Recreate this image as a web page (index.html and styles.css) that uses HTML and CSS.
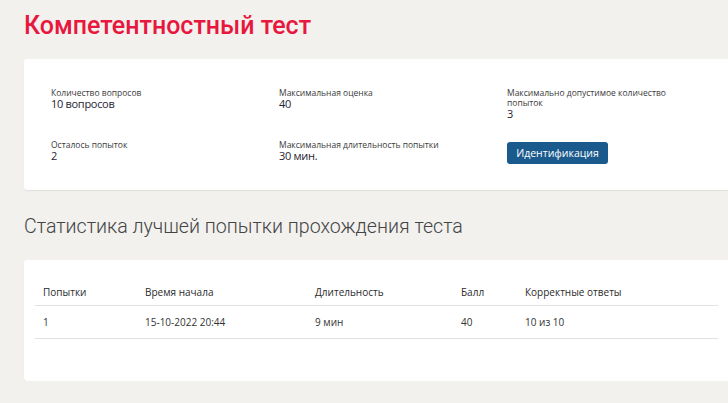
FILE: index.html
```html
<!DOCTYPE html>
<html lang="ru">
<head>
    <meta charset="UTF-8">
    <title>Компетентностный тест</title>
    <link rel="stylesheet" href="styles.css">
</head>
<body>
    <h1 class="title">Компетентностный тест</h1>
    <div class="card info">
        <div class="item">
            <div class="label">Количество вопросов</div>
            <div class="value">10 вопросов</div>
        </div>
        <div class="item">
            <div class="label">Максимальная оценка</div>
            <div class="value">40</div>
        </div>
        <div class="item">
            <div class="label narrow">Максимально допустимое количество попыток</div>
            <div class="value">3</div>
        </div>
        <div class="item">
            <div class="label">Осталось попыток</div>
            <div class="value">2</div>
        </div>
        <div class="item">
            <div class="label">Максимальная длительность попытки</div>
            <div class="value">30 мин.</div>
        </div>
        <div class="item">
            <a href="#" class="btn">Идентификация</a>
        </div>
    </div>
    <h2 class="subtitle">Статистика лучшей попытки прохождения теста</h2>
    <div class="card stats">
        <table class="tbl">
            <tr>
                <th class="c1">Попытки</th>
                <th class="c2">Время начала</th>
                <th class="c3">Длительность</th>
                <th class="c4">Балл</th>
                <th>Корректные ответы</th>
            </tr>
            <tr>
                <td>1</td>
                <td>15-10-2022 20:44</td>
                <td>9 мин</td>
                <td>40</td>
                <td>10 из 10</td>
            </tr>
        </table>
    </div>
</body>
</html>
```

FILE: styles.css
```css
body{
    margin: 0;
    padding: 0 0 0 24px;
    background-color: #f2f1ee;
    font-family: "Open Sans", "Noto Sans", sans-serif;
    color: #333333;
}
.title{
    margin: 0;
    padding: 10px 0 0 0;
    height: 59px;
    box-sizing: border-box;
    font-family: Roboto, "Noto Sans", sans-serif;
    font-weight: 500;
    font-size: 25px;
    line-height: 32px;
    color: #e8173e;
}
.card{
    background: #ffffff;
    border-radius: 3px 0 0 3px;
    box-shadow: 0 1px 1px #e0dfdb;
}
.info{
    display: grid;
    grid-template-columns: 228px 228px 1fr;
    grid-template-rows: 52px auto;
    padding: 29px 0 26px 27px;
}
.item{
    min-height: 23px;
}
.label{
    font-size: 8.5px;
    line-height: 10px;
    color: #3a3a3a;
}
.narrow{
    width: 170px;
}
.value{
    font-size: 11px;
    line-height: 12px;
    letter-spacing: -0.3px;
    color: #1f2533;
}
.btn{
    display: inline-block;
    box-sizing: border-box;
    width: 101px;
    height: 22px;
    line-height: 22px;
    text-align: center;
    background-color: #1b5a8c;
    color: #ffffff;
    font-size: 10.5px;
    text-decoration: none;
    border-radius: 3px;
}
.subtitle{
    margin: 0;
    height: 70px;
    box-sizing: border-box;
    padding: 24px 0 0 0;
    font-family: Roboto, "Noto Sans", sans-serif;
    font-weight: 300;
    font-size: 19.6px;
    line-height: 26px;
    color: #444444;
}
.stats{
    padding: 19px 10px 42px 11px;
}
.tbl{
    width: 100%;
    border-collapse: collapse;
    font-size: 10px;
}
.tbl th{
    text-align: left;
    font-weight: normal;
    height: 26px;
    padding: 0 0 0 8px;
    border-bottom: 1px solid #e2e1de;
    color: #2a2a2a;
}
.tbl td{
    height: 32px;
    padding: 0 0 0 8px;
    border-bottom: 1px solid #e2e1de;
    color: #333333;
}
.c1{ width: 94px; }
.c2{ width: 162px; }
.c3{ width: 138px; }
.c4{ width: 56px; }
```
